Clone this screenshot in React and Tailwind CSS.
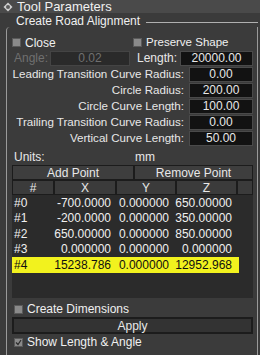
import React from "react";

const F = { fontFamily: '"Liberation Sans", Arial, sans-serif' };

function Check({ checked }) {
  return (
    <span className="inline-flex w-[9px] h-[9px] bg-[#8a8a8a] border border-[#5a5a5a] items-center justify-center shrink-0">
      {checked && (
        <svg width="7" height="7" viewBox="0 0 7 7">
          <path d="M1 3.5 L3 5.5 L6 1" stroke="#2a2a2a" strokeWidth="1.2" fill="none" />
        </svg>
      )}
    </span>
  );
}

function Field({ label, value }) {
  return (
    <div className="flex items-center h-[16px] justify-end">
      <span className="text-[#e8e8e8] mr-[5px] text-[11.6px] whitespace-nowrap">{label}</span>
      <div className="w-[64px] h-[15px] shrink-0 bg-[#121212] border border-[#4a4a4a] flex items-center justify-center text-[#e8e8e8] text-[12px]">
        {value}
      </div>
    </div>
  );
}

const rows = [
  ["#0", "-700.0000", "0.000000", "650.00000"],
  ["#1", "-200.0000", "0.000000", "350.00000"],
  ["#2", "650.00000", "0.000000", "850.00000"],
  ["#3", "0.000000", "0.000000", "0.000000"],
  ["#4", "15238.786", "0.000000", "12952.968"],
];

export default function App() {
  return (
    <div className="w-[260px] h-[355px] bg-[#3b3b3b] text-[12px] leading-none relative overflow-hidden whitespace-nowrap" style={F}>
      {/* title bar */}
      <div className="h-[13px] bg-[#4a4a4a] flex items-center pl-[3px] text-[#f0f0f0] text-[13px]">
        <svg width="10" height="10" viewBox="0 0 10 10" className="mr-[4px]">
          <path d="M5 0.5 L9.5 5 L5 9.5 L0.5 5 Z" fill="#d0d0d0" />
          <circle cx="5" cy="5" r="2" fill="#5a5a5a" />
        </svg>
        Tool Parameters
      </div>
      {/* group */}
      <div className="relative mt-[1px] ml-[6px] mr-[2px]">
        <div className="flex items-center h-[13px]">
          <span className="text-[#f0f0f0] text-[12px] pl-[10px] pr-[6px]">Create Road Alignment</span>
          <div className="flex-1 h-[1px] bg-[#b0b0b0] mt-[3px]" />
        </div>
        <div className="border-l border-r border-[#9a9a9a] h-[341px] rounded-tl-[4px] pl-[5px] pr-[4px] flex flex-col">
          <div className="flex items-center h-[15px] mt-[8px]">
            <div className="flex items-center w-[121px] gap-[4px] text-[#f0f0f0] text-[12px]">
              <Check /> Close
            </div>
            <div className="flex items-center gap-[4px] text-[#f0f0f0] text-[11.5px]">
              <Check /> Preserve Shape
            </div>
          </div>
          <div className="flex items-center h-[16px]">
            <span className="text-[#707070] w-[38px] shrink-0 pl-[2px]">Angle:</span>
            <div className="w-[80px] shrink-0 h-[15px] bg-[#2a2a2a] border border-[#444] flex items-center justify-center text-[#707070]">0.02</div>
            <span className="text-[#e8e8e8] ml-[7px] mr-[3px]">Length:</span>
            <div className="flex-1 h-[15px] bg-[#121212] border border-[#4a4a4a] flex items-center justify-center text-[#e8e8e8]">20000.00</div>
          </div>
          <div className="flex flex-col">
            <Field label="Leading Transition Curve Radius:" value="0.00" />
            <Field label="Circle Radius:" value="200.00" />
            <Field label="Circle Curve Length:" value="100.00" />
            <Field label="Trailing Transition Curve Radius:" value="0.00" />
            <Field label="Vertical Curve Length:" value="50.00" />
          </div>
          <div className="flex items-center h-[19px] text-[#e8e8e8] pt-[2px]">
            <span className="w-[123px] pl-[2px]">Units:</span>
            <span>mm</span>
          </div>
          <div className="flex h-[15px] text-[#e8e8e8] text-[12px]">
            <div className="w-[122px] border border-[#1c1c1c] bg-[#3e3e3e] flex items-center justify-center">Add Point</div>
            <div className="flex-1 border border-[#1c1c1c] bg-[#3e3e3e] flex items-center justify-center">Remove Point</div>
          </div>
          <div className="bg-[#2b2b2b] h-[118px] flex flex-col">
            <div className="flex h-[15px] text-[#e8e8e8] text-[12px] bg-[#3b3b3b]">
              <div className="w-[42px] border border-[#1c1c1c] flex items-center justify-center">#</div>
              <div className="w-[62px] border border-[#1c1c1c] flex items-center justify-center">X</div>
              <div className="w-[60px] border border-[#1c1c1c] flex items-center justify-center">Y</div>
              <div className="w-[61px] border border-[#1c1c1c] flex items-center justify-center">Z</div>
              <div className="flex-1 border border-[#1c1c1c]" />
            </div>
            <div className="flex flex-col">
              {rows.map((r, i) => {
                const hl = i === 4;
                return (
                  <div
                    key={i}
                    className={
                      "flex h-[15.5px] items-center text-[12px] w-[227px] " +
                      (hl ? "bg-[#f2f21e] text-[#101010]" : "text-[#f0f0f0]")
                    }
                  >
                    <span className="w-[42px] pl-[2px]">{r[0]}</span>
                    <span className="w-[57px] text-right">{r[1]}</span>
                    <span className="w-[58px] text-right">{r[2]}</span>
                    <span className="w-[63px] text-right">{r[3]}</span>
                  </div>
                );
              })}
            </div>
          </div>
          <div className="flex items-center h-[16px] mt-[3px] gap-[4px] text-[#f0f0f0] text-[12px] pl-[2px]">
            <Check /> Create Dimensions
          </div>
          <div className="h-[17px] border-2 border-[#1c1c1c] bg-[#333] flex items-center justify-center text-[#e8e8e8] text-[12px]">Apply</div>
          <div className="flex items-center h-[16px] gap-[4px] text-[#f0f0f0] text-[12px] pl-[2px]">
            <Check checked /> Show Length &amp; Angle
          </div>
        </div>
      </div>
    </div>
  );
}
